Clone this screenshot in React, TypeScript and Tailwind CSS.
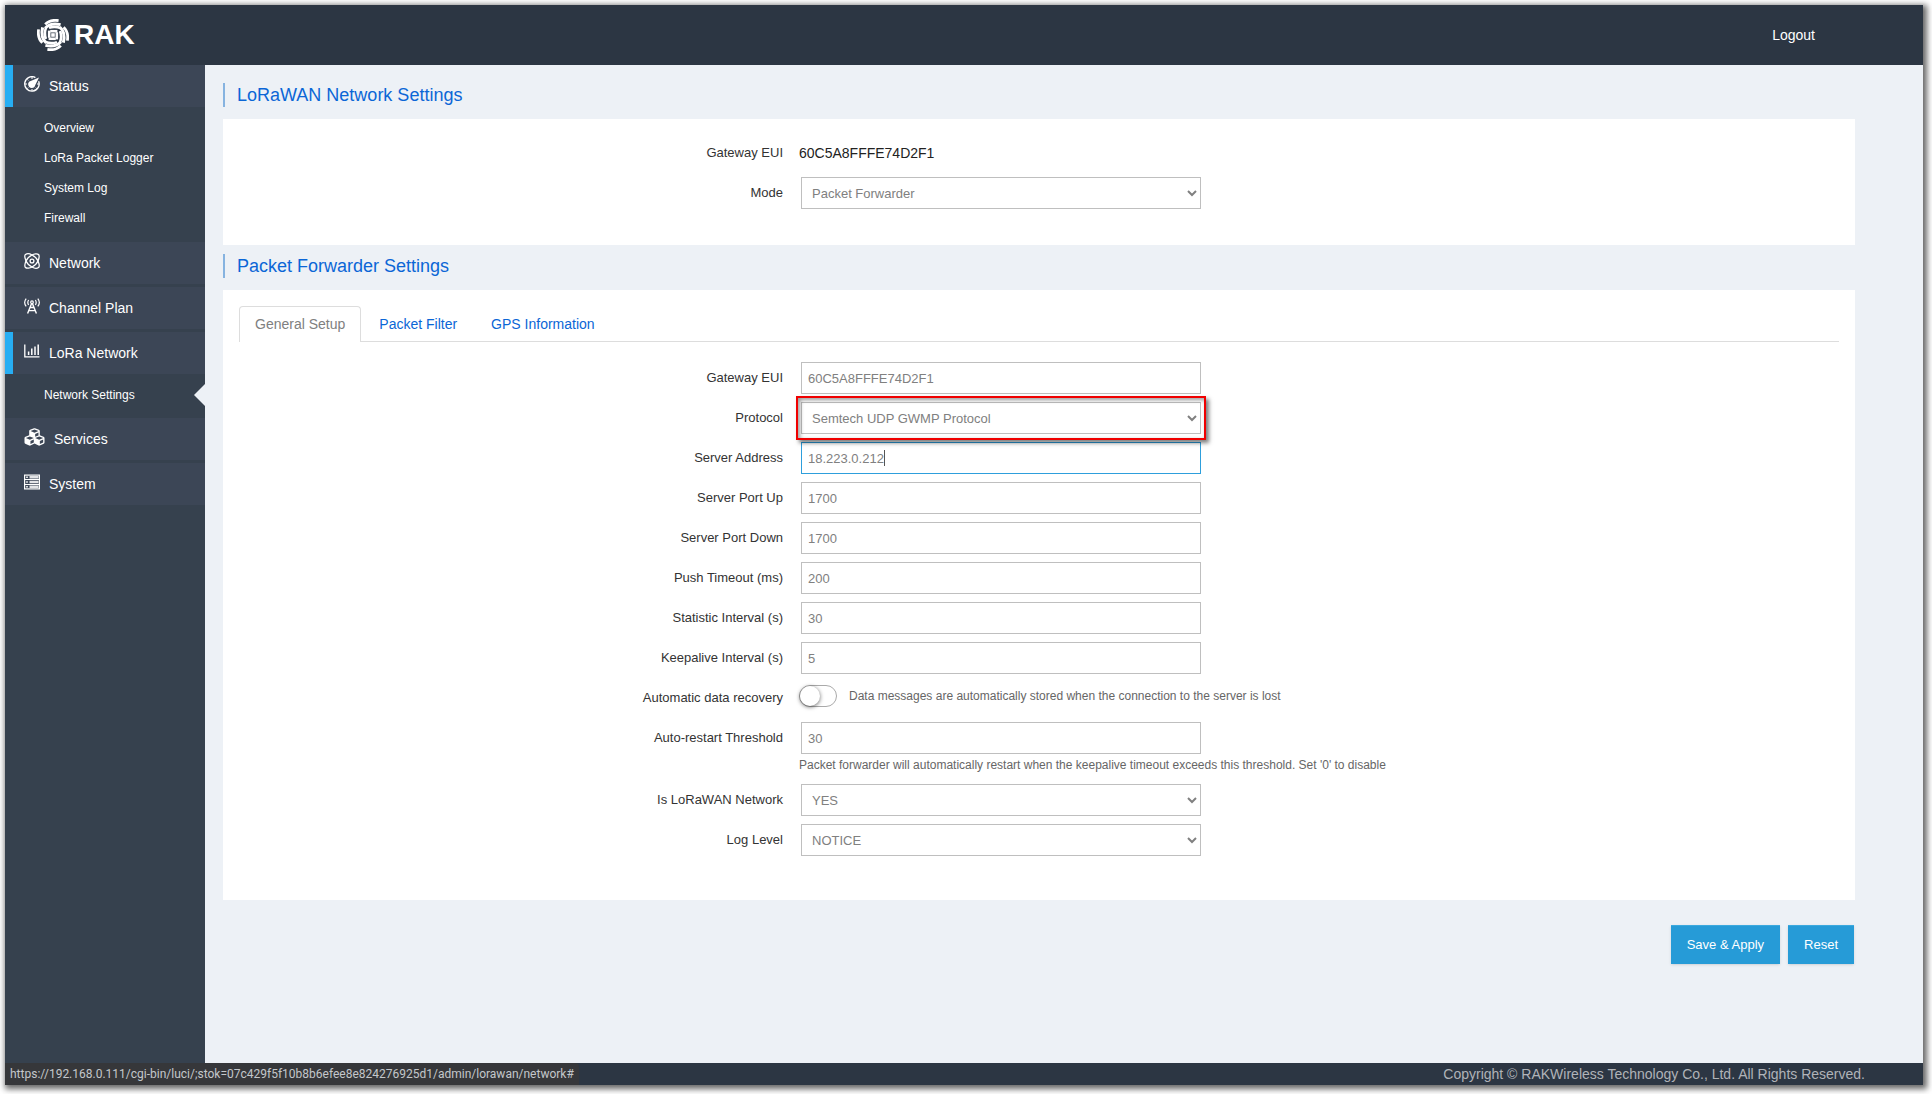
import type { ReactNode } from "react";
import { FaCubes } from "react-icons/fa";

const controlClass =
  "block h-8 w-full max-w-[400px] border border-[#bfbfbf] bg-white px-1.5 text-[13px] text-[#808080] outline-none";

function RakMark() {
  return (
    <svg className="size-8" viewBox="0 0 32 32" fill="none" stroke="#fff" aria-hidden="true">
      {[0, 90, 180, 270].map((angle) => (
        <g key={angle} transform={`rotate(${angle} 16 16)`}>
          <path d="M8.200 5.400C11.800 1.500 16.500 .8 21.600 1.600" strokeWidth="2.800" />
          <path d="M8.200 9.200C11.500 5.200 16.500 4 23.600 5.600" strokeWidth="3" />
          <path d="M12 8.900C15.500 7.600 19.500 7.600 23.400 9" strokeWidth="2.600" />
          <path d="M13.200 12.200H20.400" strokeWidth="2.600" />
        </g>
      ))}
      <rect x="14.200" y="14.200" width="3.600" height="3.600" fill="#fff" stroke="none" />
    </svg>
  );
}

function StatusIcon() {
  return (
    <svg className="size-4" viewBox="0 0 16 16" fill="none" stroke="#fff" strokeWidth="1.4" aria-hidden="true">
      <path d="M11.4 1.6A7.2 7.2 0 1 0 14.6 5.2" />
      <path d="M8 1v2M1 8h2M8 13v2M13 8h2M3.2 3.4l1 1M3.2 12.6l1-1M12.8 12.6l-1-1" strokeWidth="1" />
      <path d="M15 1.6 11.3 9A3.6 3.6 0 1 1 6.7 4.9Z" fill="#fff" stroke="none" />
    </svg>
  );
}

function NetworkIcon() {
  return (
    <svg className="size-4" viewBox="0 0 16 16" fill="none" stroke="#fff" strokeWidth="1.3" aria-hidden="true">
      <path d="M8 2C6 .8 3 .400 1.500 1.500S1 5.600 2 8C1 10.400.4 13.400 1.500 14.500S6 15.200 8 14C10 15.200 13 15.600 14.500 14.500S15 10.400 14 8C15 5.600 15.600 2.600 14.500 1.500S10 .8 8 2Z" />
      <path d="M8 2C5 3.600 3 5.500 2 8c1 2.500 3 4.400 6 6 3-1.600 5-3.500 6-6C13 5.500 11 3.600 8 2Z" />
      <circle cx="8" cy="8" r="1.900" />
    </svg>
  );
}

function AntennaIcon() {
  return (
    <svg className="size-4" viewBox="0 0 16 16" fill="none" stroke="#fff" strokeWidth="1.2" aria-hidden="true">
      <path d="M2.200.6C.3 3 .3 6 2.200 8.400M13.800.6c1.900 2.400 1.900 5.400 0 7.800M4.600 2c-1 1.600-1 3.400 0 5M11.400 2c1 1.600 1 3.400 0 5" />
      <circle cx="8" cy="4.200" r="1.300" />
      <path d="M7.600 5.600 3.600 15.500M8.400 5.600l4 9.900M6.200 9.500h3.600M5 12.600h6" strokeWidth="1.400" />
    </svg>
  );
}

function ChartIcon() {
  return (
    <svg className="size-4" viewBox="0 0 16 16" fill="none" stroke="#fff" aria-hidden="true">
      <path d="M.8 1.500v12.300H15.500" strokeWidth="1.300" />
      <path d="M4.600 8.500V12M7.800 5.500V12M11 3.500V12M14.200 1.500V12" strokeWidth="1.500" />
    </svg>
  );
}

function RackIcon() {
  return (
    <svg className="size-4" viewBox="0 0 16 16" fill="none" stroke="#fff" aria-hidden="true">
      <rect x=".6" y="1.100" width="14.800" height="13.800" strokeWidth="1.200" />
      <path d="M.6 5.500h14.800M.6 10.500h14.800" strokeWidth="1" />
      <path d="M5.500 3.300h9M5.500 8h9M5.500 12.700h9" strokeWidth="2.400" strokeOpacity=".85" />
      <path d="M2.200 3.300h1.600M2.200 8h1.600M2.200 12.700h1.600" strokeWidth="1.400" />
    </svg>
  );
}

function NavItem({ icon, label, active = false }: { icon: ReactNode; label: string; active?: boolean }) {
  return (
    <a
      href="#"
      className={`flex h-[42px] items-center gap-[9px] border-l-8 bg-[#3c4656] pl-[11px] text-sm text-white ${
        active ? "border-[#27aef3]" : "border-[#3c4656]"
      }`}
    >
      <span className="-mt-1">{icon}</span>
      {label}
    </a>
  );
}

function SubNav({ items, current }: { items: string[]; current?: string }) {
  return (
    <ul className="pt-1.5 pb-2">
      {items.map((item) => (
        <li key={item} className="relative">
          <a href="#" className="block pl-[39px] text-xs leading-[30px] text-white">
            {item}
          </a>
          {item === current && (
            <svg className="absolute top-1 right-0 h-[22px] w-[11px]" viewBox="0 0 11 22" aria-hidden="true">
              <path d="M11 0v22L0 11Z" fill="#edf1f6" />
            </svg>
          )}
        </li>
      ))}
    </ul>
  );
}

function SectionTitle({ children }: { children: ReactNode }) {
  return (
    <h2 className="border-l-2 border-[#86b3e0] pl-3 text-lg leading-6 text-[#0b66d6]">{children}</h2>
  );
}

function Row({ label, htmlFor, children }: { label: string; htmlFor: string; children: ReactNode }) {
  return (
    <div className="grid grid-cols-[34%_minmax(0,1fr)] gap-4 pb-2">
      <label htmlFor={htmlFor} className="text-right text-[13px] leading-8 text-[#333]">
        {label}
      </label>
      <div className="min-w-0">{children}</div>
    </div>
  );
}

function TextRow({
  id,
  label,
  value,
  focused = false,
  hint,
}: {
  id: string;
  label: string;
  value: string;
  focused?: boolean;
  hint?: string;
}) {
  return (
    <Row label={label} htmlFor={id}>
      <div className="relative pl-0.5">
        <input
          id={id}
          type="text"
          defaultValue={value}
          className={focused ? `${controlClass} border-[#2e9fdc]!` : controlClass}
        />
        {focused && <span className="absolute top-2 left-[85px] h-4 w-px bg-[#555]" />}
      </div>
      {hint && <p className="text-xs leading-[22px] text-[#666]">{hint}</p>}
    </Row>
  );
}

function SelectRow({
  id,
  label,
  options,
  highlighted = false,
}: {
  id: string;
  label: string;
  options: string[];
  highlighted?: boolean;
}) {
  return (
    <Row label={label} htmlFor={id}>
      <div className="relative ml-0.5 max-w-[400px]">
        <select id={id} className={controlClass}>
          {options.map((option) => (
            <option key={option}>{option}</option>
          ))}
        </select>
        {highlighted && (
          <span className="pointer-events-none absolute -inset-x-[5px] -inset-y-1.5 z-10 border-2 border-[#f00000] shadow-[3px_3px_4px_rgba(0,0,0,0.5),inset_2px_2px_4px_rgba(0,0,0,0.4)]" />
        )}
      </div>
    </Row>
  );
}

export default function App() {
  return (
    <div className="flex min-h-screen bg-white pt-[5px] pr-[9px] pb-[9px] pl-[5px] font-['Liberation_Sans',Arial,sans-serif]">
      <div className="flex flex-1 flex-col bg-[#edf1f6] shadow-[2px_2px_6px_2px_rgba(0,0,0,0.6)]">
        <header className="flex h-[60px] items-center justify-between bg-[#2c3643] pr-[108px] pl-8">
          <a href="#" className="flex items-center gap-[5px] text-[28px] font-bold text-white">
            <RakMark />
            RAK
          </a>
          <a href="#" className="text-sm text-white">
            Logout
          </a>
        </header>

        <div className="flex flex-1">
          <nav className="w-[200px] shrink-0 bg-[#36414e]">
            <NavItem icon={<StatusIcon />} label="Status" active />
            <SubNav items={["Overview", "LoRa Packet Logger", "System Log", "Firewall"]} />
            <div className="flex flex-col gap-[3px] pt-px">
              <NavItem icon={<NetworkIcon />} label="Network" />
              <NavItem icon={<AntennaIcon />} label="Channel Plan" />
              <NavItem icon={<ChartIcon />} label="LoRa Network" active />
            </div>
            <SubNav items={["Network Settings"]} current="Network Settings" />
            <div className="flex flex-col gap-[3px]">
              <NavItem icon={<FaCubes className="h-5 w-[21px]" />} label="Services" />
              <NavItem icon={<RackIcon />} label="System" />
            </div>
          </nav>

          <main className="min-w-0 flex-1 pt-[18px] pr-[68px] pl-[18px]">
            <SectionTitle>LoRaWAN Network Settings</SectionTitle>
            <section className="mt-3 mb-[9px] bg-white px-4 pt-[18px] pb-7">
              <Row label="Gateway EUI" htmlFor="gateway-eui">
                <output id="gateway-eui" className="block text-sm leading-8 text-[#222]">
                  60C5A8FFFE74D2F1
                </output>
              </Row>
              <SelectRow id="mode" label="Mode" options={["Packet Forwarder"]} />
            </section>

            <SectionTitle>Packet Forwarder Settings</SectionTitle>
            <section className="mt-3 bg-white px-4 pt-4 pb-9">
              <div role="tablist" className="mb-5 flex h-9 gap-0.5 border-b border-[#ddd] text-sm">
                <button
                  role="tab"
                  aria-selected="true"
                  className="-mb-px rounded-t border border-b-0 border-[#ddd] bg-white px-[15px] pb-0.5 text-[#808080]"
                >
                  General Setup
                </button>
                <button role="tab" aria-selected="false" className="px-4 text-[#0b66d6]">
                  Packet Filter
                </button>
                <button role="tab" aria-selected="false" className="px-4 text-[#0b66d6]">
                  GPS Information
                </button>
              </div>

              <TextRow id="eui" label="Gateway EUI" value="60C5A8FFFE74D2F1" />
              <SelectRow id="protocol" label="Protocol" options={["Semtech UDP GWMP Protocol"]} highlighted />
              <TextRow id="server" label="Server Address" value="18.223.0.212" focused />
              <TextRow id="port-up" label="Server Port Up" value="1700" />
              <TextRow id="port-down" label="Server Port Down" value="1700" />
              <TextRow id="push-timeout" label="Push Timeout (ms)" value="200" />
              <TextRow id="statistic" label="Statistic Interval (s)" value="30" />
              <TextRow id="keepalive" label="Keepalive Interval (s)" value="5" />
              <Row label="Automatic data recovery" htmlFor="recovery">
                <div className="flex h-8 items-center gap-3 pb-1">
                  <input
                    id="recovery"
                    type="checkbox"
                    role="switch"
                    className="h-[22px] w-[38px] shrink-0 appearance-none rounded-full border border-[#aaa] bg-white before:block before:size-5 before:rounded-full before:bg-white before:shadow-[0_1px_4px_rgba(0,0,0,0.6)] checked:bg-[#269bd7] checked:before:ml-4"
                  />
                  <span className="text-xs text-[#666]">
                    Data messages are automatically stored when the connection to the server is lost
                  </span>
                </div>
              </Row>
              <TextRow
                id="restart"
                label="Auto-restart Threshold"
                value="30"
                hint="Packet forwarder will automatically restart when the keepalive timeout exceeds this threshold. Set '0' to disable"
              />
              <SelectRow id="is-lorawan" label="Is LoRaWAN Network" options={["YES", "NO"]} />
              <SelectRow id="log-level" label="Log Level" options={["NOTICE", "INFO", "WARNING", "ERROR"]} />
            </section>

            <div className="mt-[25px] mb-8 flex justify-end gap-2 pr-px text-[13px] text-white">
              <button className="h-[39px] border-t border-[#3ba9de] bg-[#269bd7] px-4 shadow-sm">
                Save &amp; Apply
              </button>
              <button className="h-[39px] border-t border-[#3ba9de] bg-[#269bd7] px-4 shadow-sm">Reset</button>
            </div>
          </main>
        </div>

        <footer className="flex h-[22px] items-center justify-between bg-[#2c3643] pr-[58px]">
          <span className="h-full rounded-tr-sm bg-[#36373a] px-[5px] font-['Roboto','Noto_Sans',sans-serif] text-xs leading-[22px] text-[#c4c7cb]">
            https://192.168.0.111/cgi-bin/luci/;stok=07c429f5f10b8b6efee8e824276925d1/admin/lorawan/network#
          </span>
          <p className="text-sm text-[#b0b3b8]">
            Copyright © RAKWireless Technology Co., Ltd. All Rights Reserved.
          </p>
        </footer>
      </div>
    </div>
  );
}
